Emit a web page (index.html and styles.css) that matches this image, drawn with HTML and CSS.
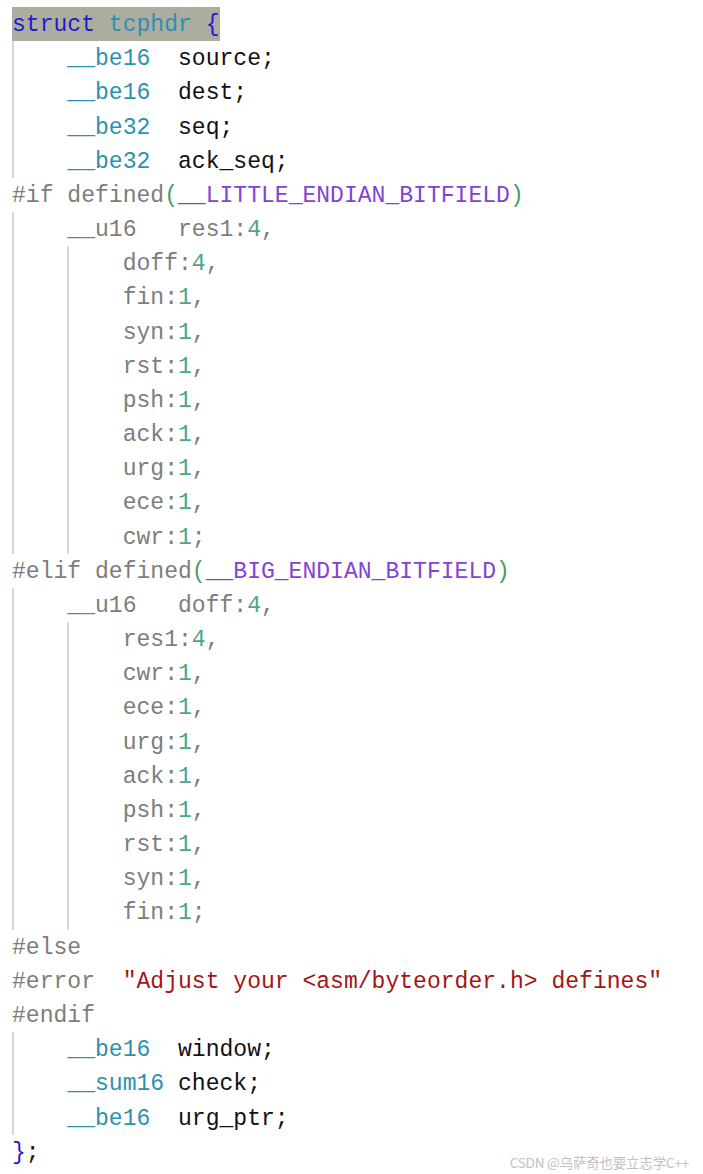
FILE: index.html
```html
<!DOCTYPE html>
<html>
<head>
<meta charset="utf-8">
<link rel="stylesheet" href="styles.css">
</head>
<body>
<div class="page">
<div class="code">
<div class="ln hl"><span class="kw">struct</span> <span class="ty">tcphdr</span> <span class="kw">{</span></div>
<div class="grp">
<div class="ln">    <span class="ty">__be16</span>  source;</div>
<div class="ln">    <span class="ty">__be16</span>  dest;</div>
<div class="ln">    <span class="ty">__be32</span>  seq;</div>
<div class="ln">    <span class="ty">__be32</span>  ack_seq;</div>
</div>
<div class="ln pp">#if defined<span class="par">(</span><span class="mac">__LITTLE_ENDIAN_BITFIELD</span><span class="par">)</span></div>
<div class="grp pp">
<div class="ln">    __u16   res1:<span class="num">4</span>,</div>
<div class="grp nest">
<div class="ln">        doff:<span class="num">4</span>,</div>
<div class="ln">        fin:<span class="num">1</span>,</div>
<div class="ln">        syn:<span class="num">1</span>,</div>
<div class="ln">        rst:<span class="num">1</span>,</div>
<div class="ln">        psh:<span class="num">1</span>,</div>
<div class="ln">        ack:<span class="num">1</span>,</div>
<div class="ln">        urg:<span class="num">1</span>,</div>
<div class="ln">        ece:<span class="num">1</span>,</div>
<div class="ln">        cwr:<span class="num">1</span>;</div>
</div>
</div>
<div class="ln pp">#elif defined<span class="par">(</span><span class="mac">__BIG_ENDIAN_BITFIELD</span><span class="par">)</span></div>
<div class="grp pp">
<div class="ln">    __u16   doff:<span class="num">4</span>,</div>
<div class="grp nest">
<div class="ln">        res1:<span class="num">4</span>,</div>
<div class="ln">        cwr:<span class="num">1</span>,</div>
<div class="ln">        ece:<span class="num">1</span>,</div>
<div class="ln">        urg:<span class="num">1</span>,</div>
<div class="ln">        ack:<span class="num">1</span>,</div>
<div class="ln">        psh:<span class="num">1</span>,</div>
<div class="ln">        rst:<span class="num">1</span>,</div>
<div class="ln">        syn:<span class="num">1</span>,</div>
<div class="ln">        fin:<span class="num">1</span>;</div>
</div>
</div>
<div class="ln pp">#else</div>
<div class="ln pp">#error  <span class="str">"Adjust your &lt;asm/byteorder.h&gt; defines"</span></div>
<div class="ln pp">#endif</div>
<div class="grp">
<div class="ln">    <span class="ty">__be16</span>  window;</div>
<div class="ln">    <span class="ty">__sum16</span> check;</div>
<div class="ln">    <span class="ty">__be16</span>  urg_ptr;</div>
</div>
<div class="ln"><span class="kw">}</span>;</div>
</div>
<div class="wm">CSDN @乌萨奇也要立志学C++</div>
</div>
</body>
</html>
```
FILE: styles.css
```css
html, body {
  margin: 0;
  padding: 0;
  background: #ffffff;
}

.page {
  position: relative;
  width: 703px;
  height: 1174px;
  overflow: hidden;
  background: #ffffff;
}

.code {
  padding: 7px 0 0 12px;
  font-family: "Liberation Mono", "DejaVu Sans Mono", monospace;
  font-size: 23.05px;
  color: #111111;
}

.ln {
  height: 34.18px;
  line-height: 36px;
  white-space: pre;
}

.hl {
  width: max-content;
  background: #adad9f;
}

.grp {
  background: linear-gradient(#d6d6d6, #d6d6d6) no-repeat 0 0 / 2px 100%;
}

.grp.nest {
  background-position: 4ch 0;
}

.kw { color: #1c1cd0; }
.ty { color: #2b91af; }
.pp { color: #7d7d7d; }
.par { color: #4f9a5e; }
.mac { color: #8342d4; }
.num { color: #4ea58c; }
.str { color: #a31515; }

.wm {
  position: absolute;
  right: 14px;
  bottom: 4px;
  font-family: "Noto Sans CJK SC", "Noto Sans", sans-serif;
  font-size: 13.5px;
  line-height: 16px;
  color: #c2c2c2;
  letter-spacing: -0.2px;
}
```
